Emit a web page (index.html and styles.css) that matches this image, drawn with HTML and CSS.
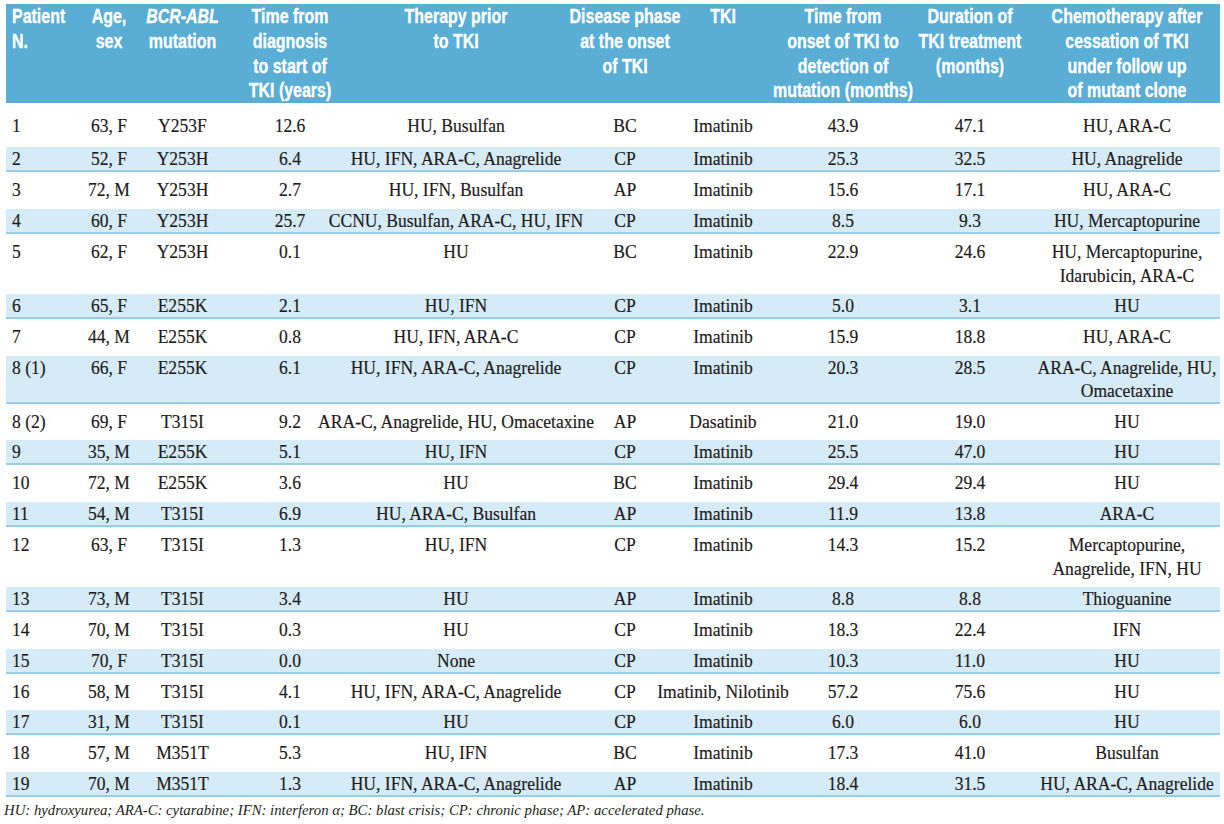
FILE: index.html
```html
<!DOCTYPE html>
<html lang="en">
<head>
<meta charset="utf-8">
<title>BCR-ABL mutations table</title>
<link rel="stylesheet" href="styles.css">
</head>
<body>
<div class="page">
  <div class="table">
    <div class="row head">
      <div class="cell c1">Patient<br>N.</div>
      <div class="cell c2">Age,<br>sex</div>
      <div class="cell c3"><span><i>BCR-ABL</i><br>mutation</span></div>
      <div class="cell c4">Time from<br>diagnosis<br>to start of<br>TKI (years)</div>
      <div class="cell c5">Therapy prior<br>to TKI</div>
      <div class="cell c6">Disease phase<br>at the onset<br>of TKI</div>
      <div class="cell c7">TKI</div>
      <div class="cell c8">Time from<br>onset of TKI to<br>detection of<br>mutation (months)</div>
      <div class="cell c9">Duration of<br>TKI treatment<br>(months)</div>
      <div class="cell c10">Chemotherapy after<br>cessation of TKI<br>under follow up<br>of mutant clone</div>
    </div>

    <div class="row white first">
      <div class="cell c1">1</div><div class="cell c2">63, F</div><div class="cell c3">Y253F</div><div class="cell c4">12.6</div><div class="cell c5">HU, Busulfan</div><div class="cell c6">BC</div><div class="cell c7">Imatinib</div><div class="cell c8">43.9</div><div class="cell c9">47.1</div><div class="cell c10">HU, ARA-C</div>
    </div>
    <div class="row blue">
      <div class="cell c1">2</div><div class="cell c2">52, F</div><div class="cell c3">Y253H</div><div class="cell c4">6.4</div><div class="cell c5">HU, IFN, ARA-C, Anagrelide</div><div class="cell c6">CP</div><div class="cell c7">Imatinib</div><div class="cell c8">25.3</div><div class="cell c9">32.5</div><div class="cell c10">HU, Anagrelide</div>
    </div>
    <div class="row white">
      <div class="cell c1">3</div><div class="cell c2">72, M</div><div class="cell c3">Y253H</div><div class="cell c4">2.7</div><div class="cell c5">HU, IFN, Busulfan</div><div class="cell c6">AP</div><div class="cell c7">Imatinib</div><div class="cell c8">15.6</div><div class="cell c9">17.1</div><div class="cell c10">HU, ARA-C</div>
    </div>
    <div class="row blue">
      <div class="cell c1">4</div><div class="cell c2">60, F</div><div class="cell c3">Y253H</div><div class="cell c4">25.7</div><div class="cell c5">CCNU, Busulfan, ARA-C, HU, IFN</div><div class="cell c6">CP</div><div class="cell c7">Imatinib</div><div class="cell c8">8.5</div><div class="cell c9">9.3</div><div class="cell c10">HU, Mercaptopurine</div>
    </div>
    <div class="row white">
      <div class="cell c1">5</div><div class="cell c2">62, F</div><div class="cell c3">Y253H</div><div class="cell c4">0.1</div><div class="cell c5">HU</div><div class="cell c6">BC</div><div class="cell c7">Imatinib</div><div class="cell c8">22.9</div><div class="cell c9">24.6</div><div class="cell c10">HU, Mercaptopurine,<br>Idarubicin, ARA-C</div>
    </div>
    <div class="row blue">
      <div class="cell c1">6</div><div class="cell c2">65, F</div><div class="cell c3">E255K</div><div class="cell c4">2.1</div><div class="cell c5">HU, IFN</div><div class="cell c6">CP</div><div class="cell c7">Imatinib</div><div class="cell c8">5.0</div><div class="cell c9">3.1</div><div class="cell c10">HU</div>
    </div>
    <div class="row white">
      <div class="cell c1">7</div><div class="cell c2">44, M</div><div class="cell c3">E255K</div><div class="cell c4">0.8</div><div class="cell c5">HU, IFN, ARA-C</div><div class="cell c6">CP</div><div class="cell c7">Imatinib</div><div class="cell c8">15.9</div><div class="cell c9">18.8</div><div class="cell c10">HU, ARA-C</div>
    </div>
    <div class="row blue">
      <div class="cell c1">8 (1)</div><div class="cell c2">66, F</div><div class="cell c3">E255K</div><div class="cell c4">6.1</div><div class="cell c5">HU, IFN, ARA-C, Anagrelide</div><div class="cell c6">CP</div><div class="cell c7">Imatinib</div><div class="cell c8">20.3</div><div class="cell c9">28.5</div><div class="cell c10">ARA-C, Anagrelide, HU,<br>Omacetaxine</div>
    </div>
    <div class="row white">
      <div class="cell c1">8 (2)</div><div class="cell c2">69, F</div><div class="cell c3">T315I</div><div class="cell c4">9.2</div><div class="cell c5">ARA-C, Anagrelide, HU, Omacetaxine</div><div class="cell c6">AP</div><div class="cell c7">Dasatinib</div><div class="cell c8">21.0</div><div class="cell c9">19.0</div><div class="cell c10">HU</div>
    </div>
    <div class="row blue">
      <div class="cell c1">9</div><div class="cell c2">35, M</div><div class="cell c3">E255K</div><div class="cell c4">5.1</div><div class="cell c5">HU, IFN</div><div class="cell c6">CP</div><div class="cell c7">Imatinib</div><div class="cell c8">25.5</div><div class="cell c9">47.0</div><div class="cell c10">HU</div>
    </div>
    <div class="row white">
      <div class="cell c1">10</div><div class="cell c2">72, M</div><div class="cell c3">E255K</div><div class="cell c4">3.6</div><div class="cell c5">HU</div><div class="cell c6">BC</div><div class="cell c7">Imatinib</div><div class="cell c8">29.4</div><div class="cell c9">29.4</div><div class="cell c10">HU</div>
    </div>
    <div class="row blue">
      <div class="cell c1">11</div><div class="cell c2">54, M</div><div class="cell c3">T315I</div><div class="cell c4">6.9</div><div class="cell c5">HU, ARA-C, Busulfan</div><div class="cell c6">AP</div><div class="cell c7">Imatinib</div><div class="cell c8">11.9</div><div class="cell c9">13.8</div><div class="cell c10">ARA-C</div>
    </div>
    <div class="row white">
      <div class="cell c1">12</div><div class="cell c2">63, F</div><div class="cell c3">T315I</div><div class="cell c4">1.3</div><div class="cell c5">HU, IFN</div><div class="cell c6">CP</div><div class="cell c7">Imatinib</div><div class="cell c8">14.3</div><div class="cell c9">15.2</div><div class="cell c10">Mercaptopurine,<br>Anagrelide, IFN, HU</div>
    </div>
    <div class="row blue">
      <div class="cell c1">13</div><div class="cell c2">73, M</div><div class="cell c3">T315I</div><div class="cell c4">3.4</div><div class="cell c5">HU</div><div class="cell c6">AP</div><div class="cell c7">Imatinib</div><div class="cell c8">8.8</div><div class="cell c9">8.8</div><div class="cell c10">Thioguanine</div>
    </div>
    <div class="row white">
      <div class="cell c1">14</div><div class="cell c2">70, M</div><div class="cell c3">T315I</div><div class="cell c4">0.3</div><div class="cell c5">HU</div><div class="cell c6">CP</div><div class="cell c7">Imatinib</div><div class="cell c8">18.3</div><div class="cell c9">22.4</div><div class="cell c10">IFN</div>
    </div>
    <div class="row blue">
      <div class="cell c1">15</div><div class="cell c2">70, F</div><div class="cell c3">T315I</div><div class="cell c4">0.0</div><div class="cell c5">None</div><div class="cell c6">CP</div><div class="cell c7">Imatinib</div><div class="cell c8">10.3</div><div class="cell c9">11.0</div><div class="cell c10">HU</div>
    </div>
    <div class="row white">
      <div class="cell c1">16</div><div class="cell c2">58, M</div><div class="cell c3">T315I</div><div class="cell c4">4.1</div><div class="cell c5">HU, IFN, ARA-C, Anagrelide</div><div class="cell c6">CP</div><div class="cell c7">Imatinib, Nilotinib</div><div class="cell c8">57.2</div><div class="cell c9">75.6</div><div class="cell c10">HU</div>
    </div>
    <div class="row blue">
      <div class="cell c1">17</div><div class="cell c2">31, M</div><div class="cell c3">T315I</div><div class="cell c4">0.1</div><div class="cell c5">HU</div><div class="cell c6">CP</div><div class="cell c7">Imatinib</div><div class="cell c8">6.0</div><div class="cell c9">6.0</div><div class="cell c10">HU</div>
    </div>
    <div class="row white">
      <div class="cell c1">18</div><div class="cell c2">57, M</div><div class="cell c3">M351T</div><div class="cell c4">5.3</div><div class="cell c5">HU, IFN</div><div class="cell c6">BC</div><div class="cell c7">Imatinib</div><div class="cell c8">17.3</div><div class="cell c9">41.0</div><div class="cell c10">Busulfan</div>
    </div>
    <div class="row blue">
      <div class="cell c1">19</div><div class="cell c2">70, M</div><div class="cell c3">M351T</div><div class="cell c4">1.3</div><div class="cell c5">HU, IFN, ARA-C, Anagrelide</div><div class="cell c6">AP</div><div class="cell c7">Imatinib</div><div class="cell c8">18.4</div><div class="cell c9">31.5</div><div class="cell c10">HU, ARA-C, Anagrelide</div>
    </div>
  </div>
  <p class="note">HU: hydroxyurea; ARA-C: cytarabine; IFN: interferon α; BC: blast crisis; CP: chronic phase; AP: accelerated phase.</p>
</div>
</body>
</html>
```

FILE: styles.css
```css
html, body {
  margin: 0;
  padding: 0;
  background: #ffffff;
}

.page {
  padding: 4px 0 0 6px;
  width: 1214px;
}

.table {
  display: flex;
  flex-direction: column;
}

.row {
  display: grid;
  grid-template-columns: 69px 68px 79px 112px 244px 94px 102px 138px 116px 192px;
}

.cell {
  min-width: 0;
  display: flex;
  flex-direction: column;
  align-items: center;
  text-align: center;
  white-space: nowrap;
  transform-origin: 50% 50%;
}

.cell.c1 {
  align-items: flex-start;
  text-align: left;
  padding-left: 6px;
  transform-origin: 6px 50%;
}

.cell.c4 {
  padding-left: 24px;
  transform-origin: 68px 50%;
}

.cell.c10 {
  padding-left: 6px;
  transform-origin: 99px 50%;
}

/* header: heavy condensed sans */
.head {
  background: #5aadd5;
  color: #ffffff;
  font-family: "Liberation Sans", Arial, sans-serif;
  font-weight: bold;
  font-size: 21px;
  line-height: 24.75px;
}

.head .cell {
  transform: scaleX(0.76);
  -webkit-text-stroke: 0.35px #ffffff;
}

/* body rows: condensed serif */
.white, .blue {
  font-family: "Liberation Serif", "Times New Roman", serif;
  font-size: 19.5px;
  color: #1f1b1c;
}

.white .cell, .blue .cell {
  transform: scaleX(0.9);
  -webkit-text-stroke: 0.2px #1f1b1c;
}

.white {
  background: #ffffff;
  line-height: 24px;
  padding: 6.25px 0;
}

.white.first {
  padding: 11px 0 9px;
}

.blue {
  background: #d5ebf7;
  line-height: 23px;
  border-bottom: 2px solid #98cde9;
}

.note {
  margin: 4px 0 0 -2px;
  font-family: "Liberation Serif", "Times New Roman", serif;
  font-style: italic;
  font-size: 14.75px;
  line-height: 18px;
  color: #231f20;
}
```
